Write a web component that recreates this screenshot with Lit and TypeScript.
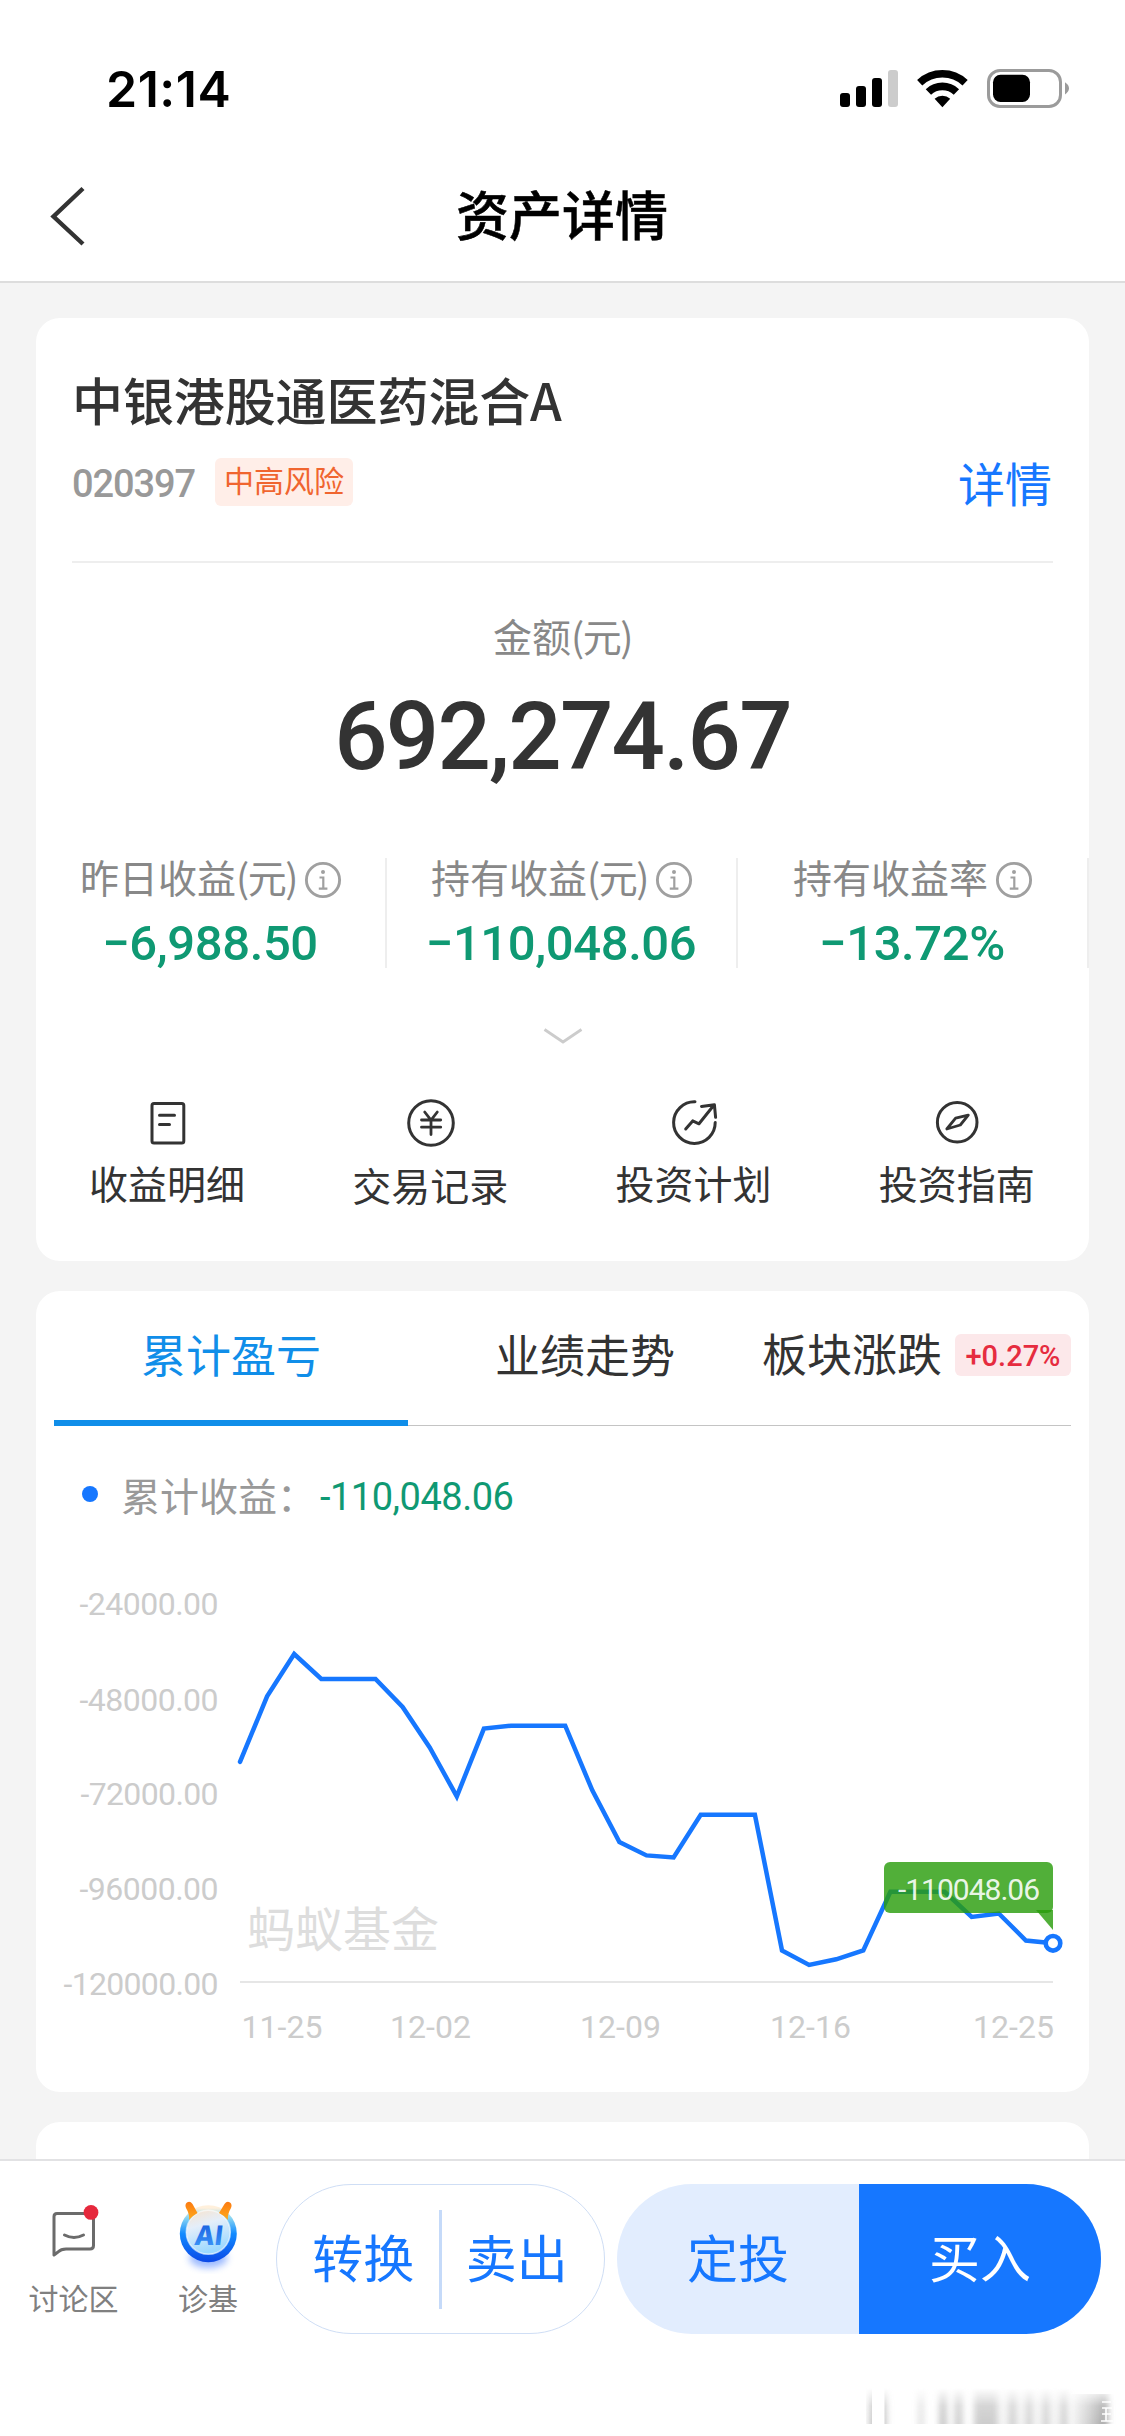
import { LitElement, html, svg, css } from "lit";
import { customElement } from "lit/decorators.js";
import { classMap } from "lit/directives/class-map.js";

const Y_LABELS = [
  { text: "-24000.00", y: 90, w: 139 },
  { text: "-48000.00", y: 185.2, w: 139 },
  { text: "-72000.00", y: 279.3, w: 138 },
  { text: "-96000.00", y: 374.3, w: 139 },
  { text: "-120000.00", y: 469.6, w: 155 },
];
const X_LABELS = [
  { text: "11-25", x: 187.5 },
  { text: "12-02", x: 336 },
  { text: "12-09", x: 526 },
  { text: "12-16", x: 716 },
  { text: "12-25", x: 919 },
];
const AXIS_LEFT = 186;
const STEP = 27.1;
const SERIES = [
  247.8, 182.4, 140, 165, 165, 165, 193, 233.5, 282.4, 214.6, 211.7, 211.7,
  211.7, 276.4, 328, 341.4, 343.5, 300.8, 300.8, 300.8, 436.4, 451, 445.3,
  436.4, 377.8, 377.8, 377.8, 403, 399.5, 426.5, 429.3,
];

const info = html`<svg class="info" width="38" height="38" viewBox="0 0 38 38" fill="none" stroke="#a0a0a0">
  <circle cx="19" cy="19" r="16.6" stroke-width="2.9" />
  <circle cx="19" cy="11" r="2" fill="#a0a0a0" stroke="none" />
  <path d="M15.5 16.5H19.3V27.5M14.8 27.7H23.4" stroke-width="2.2" />
</svg>`;

const ICONS = [
  svg`<rect x="11" y="7.5" width="31.8" height="39.6" rx="2" />
    <path d="M18.5 19.3H33.5M18.5 28.5H28.5" />`,
  svg`<circle cx="27" cy="27" r="22.3" />
    <path d="M20.7 16L27 24.2L33.3 16M27 24V38.5M17.5 24H36.7M17.5 31.2H36.7" stroke-width="2.8" />`,
  svg`<path d="M28 5.8A20.8 20.8 0 1 0 48.2 26.5" />
    <path d="M18.7 33L25.7 24.9L32 27.8L47 9M34.5 10.4L47.4 8.7L48.6 21.3" />`,
  svg`<circle cx="27.2" cy="26.3" r="19.8" />
    <path d="M38.3 19.2L25.6 22.2L16.8 33L30.3 29Z" stroke-width="2.8" />`,
];
const ACTIONS = ["收益明细", "交易记录", "投资计划", "投资指南"];
const METRICS = [
  { name: "昨日收益", unit: true, value: "−6,988.50" },
  { name: "持有收益", unit: true, value: "−110,048.06" },
  { name: "持有收益率", unit: false, value: "−13.72%" },
];

@customElement("status-bar")
class StatusBar extends LitElement {
  static styles = css`
    :host { display: flex; justify-content: space-between; height: 150px; padding: 0 55px 0 106px; box-sizing: border-box; }
    .time { font: 600 50px/60px Inter, sans-serif; color: #000; margin-top: 59px; letter-spacing: 0.5px; }
    .icons { margin-top: 68px; display: block; }
  `;
  render() {
    return html`<div class="time">21:14</div>
      <svg class="icons" width="230" height="42" viewBox="0 0 230 42">
        <rect x="0" y="25" width="10" height="14" rx="3" />
        <rect x="16" y="18" width="10" height="21" rx="3" />
        <rect x="32" y="10" width="10" height="29" rx="3" />
        <rect x="48" y="2" width="10" height="37" rx="3" fill="#ccc" />
        <g fill="none" stroke="#000">
          <path d="M79.7 14.7A33.3 33.3 0 0 1 125.1 14.7" stroke-width="7.6" />
          <path d="M88.4 24A20.5 20.5 0 0 1 116.4 24" stroke-width="7.8" />
        </g>
        <path d="M94.6 30.8A11.8 11.8 0 0 1 110.2 30.8L102.4 39.2Z" />
        <rect x="148.5" y="2.5" width="72" height="36" rx="11.5" fill="none" stroke="#9b9b9b" stroke-width="3" />
        <rect x="153" y="6.7" width="37" height="27.3" rx="7.5" />
        <path d="M225 14.3Q229 17 229 20.3T225 26.5Z" fill="#9b9b9b" />
      </svg>`;
  }
}

@customElement("asset-card")
class AssetCard extends LitElement {
  static styles = css`
    :host { display: block; height: 943px; box-sizing: border-box; padding: 45px 36px 0; background: #fff; border-radius: 24px; font-family: "Noto Sans CJK SC", sans-serif; color: #333; }
    svg { display: block; flex: none; }
    .name { font-size: 51px; font-weight: 500; line-height: 72px; letter-spacing: -0.1px; }
    .meta { display: flex; align-items: center; height: 48px; margin-top: 23px; }
    .code { font: 500 38px/48px Roboto, sans-serif; color: #999; letter-spacing: -1.1px; width: 143px; padding-top: 3px; }
    .risk { height: 48px; width: 138px; box-sizing: border-box; border-radius: 6px; background: #ffeee8; color: #f0652f; font-size: 30px; line-height: 43px; text-align: center; }
    .detail { margin-left: auto; color: #1677ff; font-size: 47px; line-height: 46px; padding-right: 1px; }
    .divider { height: 2px; background: #eee; margin-top: 55px; }
    .caption { margin-top: 53px; text-align: center; font-size: 39px; line-height: 39px; height: 40px; color: #888; }
    .unit { letter-spacing: -1.5px; }
    .total { margin-top: 31px; text-align: center; font: 500 94px/100px Roboto, sans-serif; letter-spacing: -1.8px; }
    .metrics { display: grid; grid-template-columns: repeat(3, 1fr); margin: 71px -36px 0; height: 110px; }
    .metric { border-right: 2px solid #eee; display: flex; flex-direction: column; align-items: center; }
    .label { display: flex; align-items: center; height: 36px; font-size: 39px; line-height: 36px; color: #888; gap: 7px; padding-left: 1px; white-space: nowrap; }
    .info { margin-top: 8px; }
    .value { margin-top: 26px; font: 500 49px/48px Roboto, sans-serif; color: #0f9973; letter-spacing: -0.4px; padding-right: 1px; }
    .more { margin: 58px auto 0; }
    .actions { display: grid; grid-template-columns: repeat(4, 1fr); margin: 50px -36px 0; }
    .action { display: flex; flex-direction: column; align-items: center; font-size: 39px; line-height: 40px; gap: 12px; }
    .action div { margin-right: 1px; }
    .low { gap: 14px; }
  `;
  render() {
    return html`
      <div class="name">中银港股通医药混合A</div>
      <div class="meta">
        <div class="code">020397</div>
        <div class="risk">中高风险</div>
        <div class="detail">详情</div>
      </div>
      <div class="divider"></div>
      <div class="caption">金额<span class="unit">(元)</span></div>
      <div class="total">692,274.67</div>
      <div class="metrics">
        ${METRICS.map((m) => html`<div class="metric">
          <div class="label"><span>${m.name}${m.unit ? html`<span class="unit">(元)</span>` : ""}</span>${info}</div>
          <div class="value">${m.value}</div>
        </div>`)}
      </div>
      <svg class="more" width="40" height="20" viewBox="0 0 40 20" fill="none" stroke="#ccc" stroke-width="2.8">
        <path d="M1.5 3.5L20 16L38.5 3.5" />
      </svg>
      <div class="actions">
        ${ACTIONS.map((a, i) => html`<div class=${classMap({ action: true, low: i === 1 })}>
          <svg width="54" height="54" viewBox="0 0 54 54" fill="none" stroke="#333" stroke-width="3" stroke-linecap="round" stroke-linejoin="round">${ICONS[i]}</svg>
          <div>${a}</div>
        </div>`)}
      </div>`;
  }
}

@customElement("trend-card")
class TrendCard extends LitElement {
  static styles = css`
    :host { display: block; height: 801px; box-sizing: border-box; padding: 0 18px; background: #fff; border-radius: 24px; font-family: "Noto Sans CJK SC", sans-serif; color: #333; }
    .tabs { display: grid; grid-template-columns: 354px 354px 309px; height: 135px; box-sizing: border-box; border-bottom: 1px solid #c4c4c4; }
    .tab { font-size: 45px; line-height: 126px; height: 129px; text-align: center; white-space: nowrap; }
    .active { color: #108ee9; border-bottom: 6px solid #108ee9; }
    .wide { display: flex; justify-content: flex-end; gap: 13px; }
    .wide span { line-height: 124px; }
    .change { width: 117px; height: 42px; margin-top: 43px; border-radius: 6px; background: #fce8ea; color: #e62c3f; font: 500 29px/45px Roboto, sans-serif; }
    .legend { display: flex; align-items: center; height: 40px; margin-top: 48px; padding-left: 28px; font-size: 39px; color: #999; line-height: 40px; }
    .dot { width: 16px; height: 16px; border-radius: 50%; background: #1677ff; margin-right: 23px; }
    .sum { font: 400 38px/40px Roboto, sans-serif; color: #0f9973; letter-spacing: -0.5px; margin-left: 4px; padding-top: 6px; }
    .chart { display: block; }
    .axis { font: 400 32px Roboto, sans-serif; fill: #ccc; }
    .brand { font: 400 48px "Noto Sans CJK SC", sans-serif; fill: #ddd; }
    .tip { font: 400 30px Roboto, sans-serif; fill: #fff; fill-opacity: 0.9; }
  `;
  render() {
    const line = SERIES.map((y, i) => `${(AXIS_LEFT + i * STEP).toFixed(1)},${y}`).join(" ");
    return html`
      <div class="tabs">
        <div class="tab active">累计盈亏</div>
        <div class="tab">业绩走势</div>
        <div class="tab wide"><span>板块涨跌</span><div class="change">+0.27%</div></div>
      </div>
      <div class="legend"><span class="dot"></span><span>累计收益：</span><span class="sum">-110,048.06</span></div>
      <svg class="chart" width="1017" height="546" viewBox="0 0 1017 546">
        ${Y_LABELS.map((l) => svg`<text class="axis" x=${164.5 - l.w} y=${l.y + 11.4} textLength=${l.w}>${l.text}</text>`)}
        <text class="brand" x="193" y="433">蚂蚁基金</text>
        <path d="M186 468H999" stroke="#e6e6e6" stroke-width="2" />
        ${X_LABELS.map((l) => svg`<text class="axis" x=${l.x} y="523.8" textLength="81">${l.text}</text>`)}
        <polyline points=${line} fill="none" stroke="#1677ff" stroke-width="4.5" stroke-linejoin="miter" stroke-linecap="round" />
        <g fill="#299c0b" fill-opacity="0.81">
          <rect x="830" y="348" width="169" height="51" rx="6" />
          <path d="M982 396H999V416Z" />
        </g>
        <text class="tip" x="844" y="386.3" textLength="142">-110048.06</text>
        <circle cx="999" cy="429.3" r="7.3" fill="#fff" stroke="#1677ff" stroke-width="4.6" />
      </svg>`;
  }
}

@customElement("action-footer")
class ActionFooter extends LitElement {
  static styles = css`
    :host { display: flex; flex-direction: column; height: 277px; box-sizing: border-box; border-top: 2px solid #e2e2e4; padding-top: 23px; background: #fff; font-family: "Noto Sans CJK SC", sans-serif; }
    svg { display: block; flex: none; }
    .row { display: flex; height: 150px; }
    .entry { display: flex; flex-direction: column; align-items: center; gap: 6px; padding-top: 16px; width: 122px; font-size: 30px; line-height: 34px; color: #808080; box-sizing: border-box; height: 150px; }
    .first { width: 147px; }
    .pill { display: flex; align-items: center; box-sizing: border-box; height: 150px; border-radius: 75px; font-size: 51px; line-height: 51px; color: #1677ff; overflow: hidden; }
    .pill span { flex: 1; text-align: center; padding-bottom: 6px; }
    .outline { width: 329px; margin-left: 7px; border: 1.5px solid #cfdef5; padding: 0 12px 0 11px; }
    .bar { width: 3px; height: 99px; background: #c5daf9; }
    .solid { width: 484px; margin-left: 12px; background: #e2edfe; }
    .solid .buy { background: #1677ff; color: #fff; line-height: 144px; }
    .smudge { margin: 54px 9px 0 auto; }
    .ai { font: 800 27px Inter, sans-serif; }
  `;
  render() {
    return html`
      <div class="row">
        <div class="entry first">
          <svg width="56" height="74" viewBox="0 0 56 74" fill="none" stroke="#6b6b6b" stroke-width="3" stroke-linejoin="round" stroke-linecap="round">
            <path d="M8 55V16.5Q8 13.4 11 13.4H44.5Q47.5 13.4 47.5 16.5V45.5Q47.5 49 44 49H20Q15 49 12 52Z" />
            <path d="M18.5 35Q28 40 37.5 35" />
            <circle cx="45" cy="12.4" r="7.4" fill="#e6283c" stroke="none" />
          </svg>
          <div>讨论区</div>
        </div>
        <div class="entry">
          <svg width="64" height="74" viewBox="0 0 64 74">
            <defs>
              <linearGradient id="ring" x1="0" y1="0" x2="0" y2="1">
                <stop offset="0.05" stop-color="#fff0dc" />
                <stop offset="0.22" stop-color="#8ad6f2" />
                <stop offset="0.5" stop-color="#128bff" />
                <stop offset="1" stop-color="#0b48e6" />
              </linearGradient>
              <linearGradient id="face" x1="0" y1="0" x2="0.3" y2="1">
                <stop offset="0" stop-color="#f9e3cb" />
                <stop offset="0.4" stop-color="#e4eefa" />
                <stop offset="1" stop-color="#9cd9ff" />
              </linearGradient>
              <linearGradient id="horn" x1="0" y1="0" x2="0" y2="1">
                <stop offset="0" stop-color="#fb7a12" />
                <stop offset="1" stop-color="#ffab1a" />
              </linearGradient>
              <linearGradient id="mark" x1="0" y1="0" x2="0" y2="1">
                <stop offset="0" stop-color="#1557dc" />
                <stop offset="1" stop-color="#3f9dfc" />
              </linearGradient>
              <filter id="soft" x="-50%" y="-50%" width="200%" height="200%"><feGaussianBlur stdDeviation="3.5" /></filter>
            </defs>
            <ellipse cx="32.3" cy="58" rx="19" ry="10" fill="#5b8dff" opacity="0.6" filter="url(#soft)" />
            <circle cx="32.3" cy="33.7" r="28.5" fill="url(#ring)" />
            <circle cx="32.3" cy="32.3" r="22" fill="url(#face)" stroke="#fff" stroke-opacity="0.6" stroke-width="1.5" />
            <path d="M11 2.5Q14 0.5 16.5 4L21.5 13Q16 16 13 20Q14 14.5 10 8Q8.5 4.5 11 2.5Z" fill="url(#horn)" />
            <path d="M54 2.5Q51 0.5 48.5 4L43 13Q49 16 52 20Q51 14.5 55 8Q56.5 4.5 54 2.5Z" fill="url(#horn)" />
            <text class="ai" transform="translate(17.5 44.5) skewX(-7)" x="0" y="0" textLength="28" lengthAdjust="spacingAndGlyphs" fill="url(#mark)">AI</text>
          </svg>
          <div>诊基</div>
        </div>
        <div class="pill outline"><span>转换</span><div class="bar"></div><span>卖出</span></div>
        <div class="pill solid"><span>定投</span><span class="buy">买入</span></div>
      </div>
      <svg class="smudge" width="250" height="38" viewBox="0 0 250 38">
        <defs>
          <linearGradient id="fade" x1="0" y1="0" x2="0" y2="1">
            <stop offset="0" stop-color="#fff" stop-opacity="0" />
            <stop offset="0.5" stop-color="#fff" stop-opacity="0.75" />
            <stop offset="1" stop-color="#fff" stop-opacity="0.9" />
          </linearGradient>
          <linearGradient id="edge" x1="0" y1="0" x2="1" y2="0">
            <stop offset="0" stop-color="#999" stop-opacity="0.1" />
            <stop offset="1" stop-color="#777" stop-opacity="0.8" />
          </linearGradient>
          <mask id="veil"><rect width="250" height="36" fill="url(#fade)" /></mask>
          <filter id="smear" x="-5%" y="-5%" width="110%" height="110%"><feGaussianBlur stdDeviation="3 0.5" /></filter>
        </defs>
        <g mask="url(#veil)">
          <g filter="url(#smear)" fill="#999">
            <rect x="3" y="0" width="18" height="36" opacity="0.6" />
            <rect x="52" y="0" width="6" height="36" opacity="0.3" />
            <rect x="73" y="0" width="8" height="36" opacity="0.6" />
            <rect x="88" y="0" width="9" height="36" opacity="0.5" />
            <rect x="108" y="0" width="24" height="36" opacity="0.55" />
            <rect x="134" y="0" width="70" height="36" opacity="0.12" />
            <rect x="143" y="0" width="7" height="36" opacity="0.45" />
            <rect x="160" y="0" width="6" height="36" opacity="0.45" />
            <rect x="177" y="0" width="6" height="36" opacity="0.45" />
            <rect x="195" y="0" width="6" height="36" opacity="0.5" />
            <rect x="206" y="6" width="36" height="30" fill="url(#edge)" />
          </g>
          <rect x="6" y="0" width="12.5" height="36" fill="#fff" />
          <path d="M236 14H245M236 20H246M240 20V33M236 26H245M235 33H247" stroke="#fff" stroke-width="1.6" />
        </g>
      </svg>`;
  }
}

@customElement("app-root")
class AppRoot extends LitElement {
  static styles = css`
    :host { display: flex; flex-direction: column; width: 1125px; height: 2436px; overflow: hidden; background: #fff; }
    .nav { display: grid; grid-template-columns: 1fr auto 1fr; align-items: center; height: 133px; box-sizing: border-box; border-bottom: 2px solid #ddd; }
    .back { margin-left: 50px; }
    .title { font: 500 53px/60px "Noto Sans CJK SC", sans-serif; color: #000; padding: 0 1px 5px 0; -webkit-text-stroke: 0.5px #000; }
    .content { flex: 1; min-height: 0; overflow: hidden; display: flex; flex-direction: column; gap: 30px; padding: 35px 36px 0; background: #f4f4f4; }
    .content > * { flex: none; }
    .next { height: 120px; border-radius: 24px; background: #fff; }
  `;
  render() {
    return html`
      <status-bar></status-bar>
      <div class="nav">
        <svg class="back" width="36" height="60" viewBox="0 0 36 60" fill="none" stroke="#333" stroke-width="4.4">
          <path d="M33 2.5L3.5 30.5L33 58" />
        </svg>
        <div class="title">资产详情</div>
      </div>
      <div class="content">
        <asset-card></asset-card>
        <trend-card></trend-card>
        <div class="next"></div>
      </div>
      <action-footer></action-footer>`;
  }
}
